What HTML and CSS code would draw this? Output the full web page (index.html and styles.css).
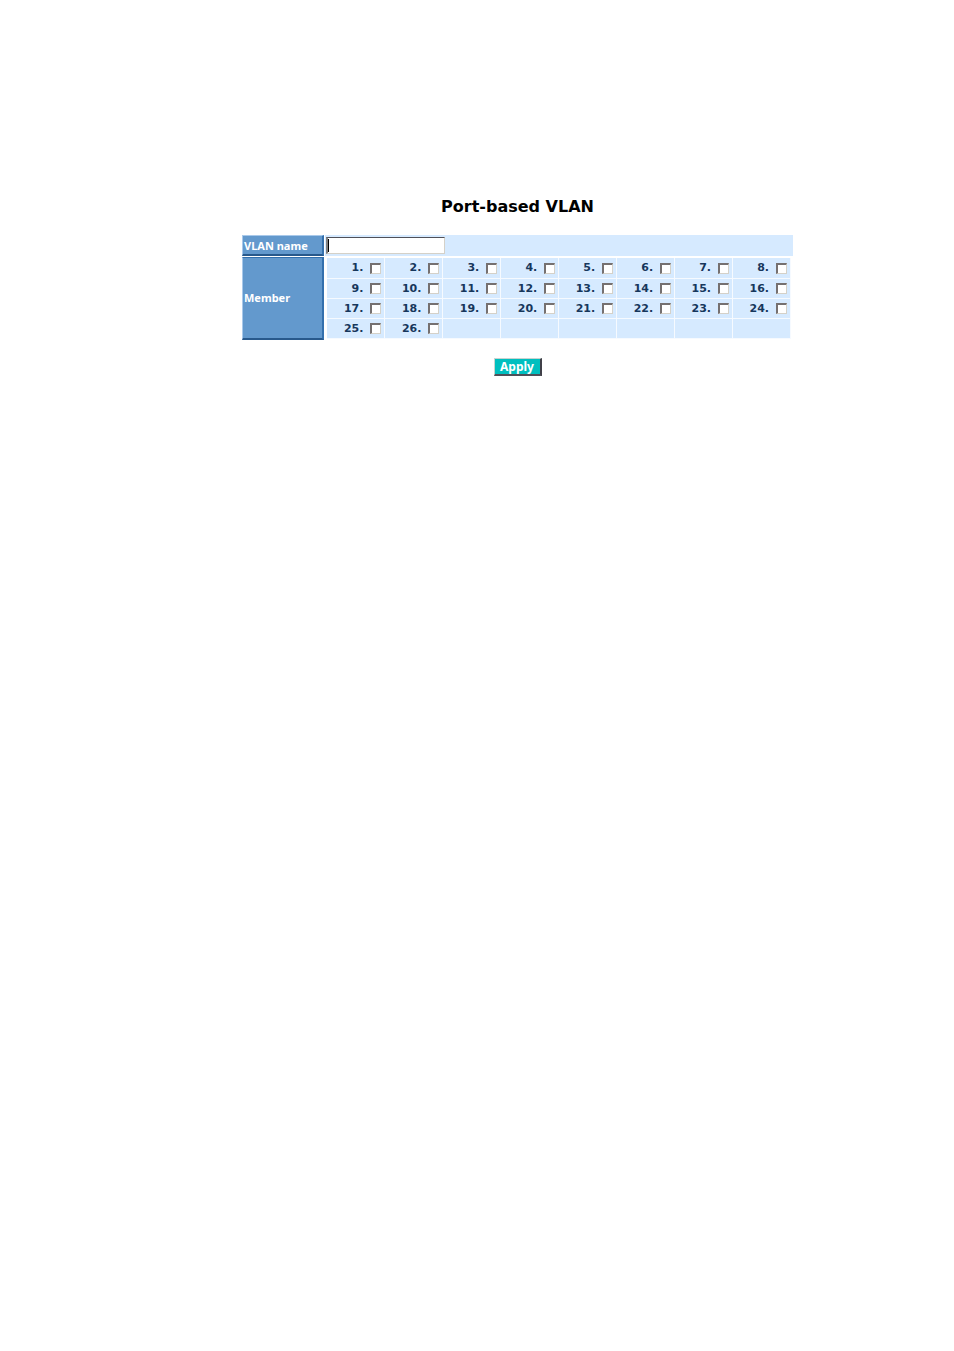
FILE: index.html
```html
<!DOCTYPE html>
<html lang="en">
<head>
<meta charset="utf-8">
<title>Port-based VLAN</title>
<link rel="stylesheet" href="styles.css">
</head>
<body>
<form class="vlan">
  <h1 class="title">Port-based VLAN</h1>
  <div class="settings">
    <label class="head" for="vlan-name">VLAN name</label>
    <div class="name-cell"><input class="name" id="vlan-name" type="text"></div>
    <div class="head head-member" id="member">Member</div>
    <table class="ports" aria-labelledby="member">
      <tbody>
        <tr>
          <td><label>1.<input type="checkbox"></label></td>
          <td><label>2.<input type="checkbox"></label></td>
          <td><label>3.<input type="checkbox"></label></td>
          <td><label>4.<input type="checkbox"></label></td>
          <td><label>5.<input type="checkbox"></label></td>
          <td><label>6.<input type="checkbox"></label></td>
          <td><label>7.<input type="checkbox"></label></td>
          <td><label>8.<input type="checkbox"></label></td>
        </tr>
        <tr>
          <td><label>9.<input type="checkbox"></label></td>
          <td><label>10.<input type="checkbox"></label></td>
          <td><label>11.<input type="checkbox"></label></td>
          <td><label>12.<input type="checkbox"></label></td>
          <td><label>13.<input type="checkbox"></label></td>
          <td><label>14.<input type="checkbox"></label></td>
          <td><label>15.<input type="checkbox"></label></td>
          <td><label>16.<input type="checkbox"></label></td>
        </tr>
        <tr>
          <td><label>17.<input type="checkbox"></label></td>
          <td><label>18.<input type="checkbox"></label></td>
          <td><label>19.<input type="checkbox"></label></td>
          <td><label>20.<input type="checkbox"></label></td>
          <td><label>21.<input type="checkbox"></label></td>
          <td><label>22.<input type="checkbox"></label></td>
          <td><label>23.<input type="checkbox"></label></td>
          <td><label>24.<input type="checkbox"></label></td>
        </tr>
        <tr>
          <td><label>25.<input type="checkbox"></label></td>
          <td><label>26.<input type="checkbox"></label></td>
          <td></td>
          <td></td>
          <td></td>
          <td></td>
          <td></td>
          <td></td>
        </tr>
      </tbody>
    </table>
  </div>
  <button class="apply" type="button">Apply</button>
</form>
</body>
</html>
```
FILE: styles.css
```css
* {
  box-sizing: border-box;
}

body {
  margin: 0;
  padding: 197px 161px 40px 242px;
  background: #fff;
  font-family: "DejaVu Sans", Verdana, sans-serif;
}

.vlan {
  display: flex;
  flex-direction: column;
  align-items: center;
}

.title {
  margin: 0 0 18px;
  font-size: 16px;
  line-height: 20px;
  font-weight: bold;
  color: #000;
}

.settings {
  display: grid;
  grid-template-columns: 82px 1fr;
  column-gap: 1px;
  row-gap: 1px;
  width: 100%;
}

.head {
  display: flex;
  align-items: center;
  border: 1px solid #a9c9ea;
  border-right: 2px solid #3470ad;
  border-bottom: 2px solid #28598c;
  padding-left: 1px;
  background: #6399cd;
  color: #fff;
  font-family: "Noto Sans", Tahoma, sans-serif;
  font-size: 11px;
  font-weight: bold;
}

.head-member {
  border-top-color: #3470ad;
}

.name-cell {
  display: flex;
  align-items: flex-start;
  padding: 2px 1px;
  background: #d6eaff;
}

/* Text box with a sunken edge and a resting caret */
.name {
  width: 119px;
  height: 17px;
  padding: 0 2px;
  border: 1px solid #d5d1c8;
  border-top-color: #505058;
  border-left: 2px solid #808080;
  background: linear-gradient(#000, #000) 0 1px / 1px 13px no-repeat #fff;
  font: 11px "DejaVu Sans", Verdana, sans-serif;
  outline: none;
}

.ports {
  width: calc(100% - 4px);
  margin: 1px 2px;
  table-layout: fixed;
  border-collapse: collapse;
  color: #17375c;
  font-size: 11px;
  font-weight: bold;
}

.ports td {
  height: 20px;
  padding: 1px 3px 0 0;
  border: solid #f6faff;
  border-width: 0 1px 1px 0;
  background: #d6eaff;
}

.ports label {
  display: flex;
  align-items: center;
  justify-content: flex-end;
  gap: 7px;
  line-height: 18px;
}

.ports input {
  appearance: none;
  width: 11px;
  height: 11px;
  margin: 0;
  border: 1px solid #d5d1c8;
  border-top: 2px solid #757070;
  border-left: 2px solid #757070;
  background: #fff;
}

.apply {
  margin-top: 18px;
  width: 48px;
  height: 18px;
  padding: 0;
  border: 1px solid #c8d4d0;
  border-right: 2px solid #404048;
  border-bottom: 2px solid #505058;
  background: #00bfbf;
  color: #fff;
  font: bold 12px/16px "Noto Sans", Tahoma, sans-serif;
}
```
